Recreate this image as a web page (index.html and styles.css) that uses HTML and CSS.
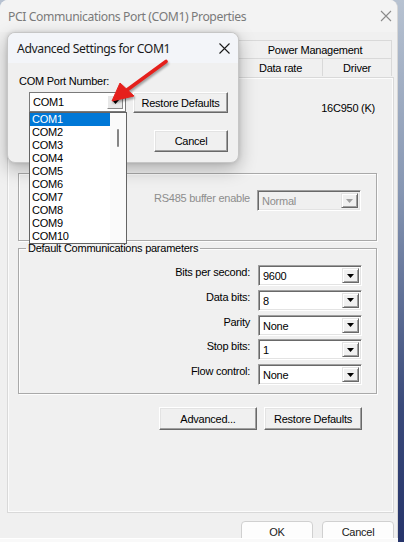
FILE: index.html
```html
<!DOCTYPE html>
<html>
<head>
<meta charset="utf-8">
<link rel="stylesheet" href="styles.css">
</head>
<body>
<div class="screen">
  <div class="window">
    <div class="titlebar">
      <span class="title">PCI Communications Port (COM1) Properties</span>
      <svg class="close" width="12" height="12" viewBox="0 0 12 12"><path d="M1 1L11 11M11 1L1 11" stroke="#8a8a8a" stroke-width="1.1"/></svg>
    </div>
    <div class="sheet">
      <div class="tabrow">
        <div class="tab spacer"></div>
        <div class="tab w154">Power Management</div>
      </div>
      <div class="tabrow">
        <div class="tab spacer"></div>
        <div class="tab w85">Data rate</div>
        <div class="tab w69">Driver</div>
      </div>
      <div class="panel">
        <div class="uart">16C950 (K)</div>
        <div class="group1">
          <span class="lbl disabled">RS485 buffer enable</span>
          <div class="sel off"><span class="val">Normal</span><span class="dd"><svg width="7" height="4" viewBox="0 0 7 4"><path d="M0 0H7L3.5 4Z" fill="#a0a0a0"/></svg></span></div>
        </div>
        <fieldset class="group2">
          <legend>Default Communications parameters</legend>
          <div class="prow"><span class="lbl">Bits per second:</span><div class="sel"><span class="val">9600</span><span class="dd"><svg width="7" height="4" viewBox="0 0 7 4"><path d="M0 0H7L3.5 4Z" fill="#000"/></svg></span></div></div>
          <div class="prow"><span class="lbl">Data bits:</span><div class="sel"><span class="val">8</span><span class="dd"><svg width="7" height="4" viewBox="0 0 7 4"><path d="M0 0H7L3.5 4Z" fill="#000"/></svg></span></div></div>
          <div class="prow"><span class="lbl">Parity</span><div class="sel"><span class="val">None</span><span class="dd"><svg width="7" height="4" viewBox="0 0 7 4"><path d="M0 0H7L3.5 4Z" fill="#000"/></svg></span></div></div>
          <div class="prow"><span class="lbl">Stop bits:</span><div class="sel"><span class="val">1</span><span class="dd"><svg width="7" height="4" viewBox="0 0 7 4"><path d="M0 0H7L3.5 4Z" fill="#000"/></svg></span></div></div>
          <div class="prow"><span class="lbl">Flow control:</span><div class="sel"><span class="val">None</span><span class="dd"><svg width="7" height="4" viewBox="0 0 7 4"><path d="M0 0H7L3.5 4Z" fill="#000"/></svg></span></div></div>
        </fieldset>
        <div class="btnrow">
          <div class="cbtn w98">Advanced...</div>
          <div class="cbtn w98">Restore Defaults</div>
        </div>
      </div>
      <div class="footer">
        <div class="mbtn">OK</div>
        <div class="mbtn">Cancel</div>
      </div>
    </div>
  </div>
  <div class="strip"></div>

  <div class="dialog">
    <div class="dtitle">
      <span>Advanced Settings for COM1</span>
      <svg width="11" height="11" viewBox="0 0 11 11"><path d="M0.5 0.5L10.5 10.5M10.5 0.5L0.5 10.5" stroke="#1a1a1a" stroke-width="1.1"/></svg>
    </div>
    <div class="dbody">
      <div class="dlabel">COM Port Number:</div>
      <div class="drow">
        <div class="combo"><span class="cval">COM1</span><span class="cdd"><svg width="7" height="4" viewBox="0 0 7 4"><path d="M0 0H7L3.5 4Z" fill="#000"/></svg></span></div>
        <div class="cbtn w95">Restore Defaults</div>
      </div>
      <div class="drow2">
        <div class="cbtn w74">Cancel</div>
      </div>
    </div>
  </div>

  <div class="droplist">
    <div class="items">
      <div class="item sel-item">COM1</div>
      <div class="item">COM2</div>
      <div class="item">COM3</div>
      <div class="item">COM4</div>
      <div class="item">COM5</div>
      <div class="item">COM6</div>
      <div class="item">COM7</div>
      <div class="item">COM8</div>
      <div class="item">COM9</div>
      <div class="item">COM10</div>
    </div>
    <div class="scroll"><div class="thumb"></div></div>
  </div>

  <svg class="arrow" width="80" height="60" viewBox="100 50 80 60">
    <path d="M127 90L166 61.5" stroke="#e5201c" stroke-width="3.6" stroke-linecap="round"/>
    <path d="M112 101L120 83L134 96Z" fill="#e5201c" stroke="#e5201c" stroke-width="1" stroke-linejoin="round"/>
  </svg>
</div>
</body>
</html>
```
FILE: styles.css
```css
* { box-sizing: border-box; }
html, body { margin: 0; padding: 0; }
body {
  width: 404px;
  height: 542px;
  overflow: hidden;
  font-family: "Liberation Sans", Arial, sans-serif;
  font-size: 11px;
  letter-spacing: -0.25px;
  color: #000;
}
.screen {
  position: relative;
  width: 404px;
  height: 542px;
  background: linear-gradient(180deg, #b7c2d1 0%, #8797b3 35%, #3a4a7a 75%, #26346a 100%);
}
.window {
  width: 398px;
  height: 538px;
  overflow: hidden;
  background: #f0f0f0;
  border-radius: 8px 8px 0 0;
  border-right: 1px solid #d6d6d6;
  display: flex;
  flex-direction: column;
}
.titlebar {
  height: 32px;
  flex: none;
  display: flex;
  align-items: center;
  justify-content: space-between;
  padding: 0 5px 0 8px;
  background: #f3f3f3;
}
.title {
  font-family: "Noto Sans", "Open Sans", sans-serif;
  font-size: 12.2px;
  letter-spacing: -0.4px;
  color: #7a7a7a;
}
.sheet {
  flex: 1;
  padding: 8px 3px 0 7px;
  display: flex;
  flex-direction: column;
}
.tabrow {
  display: flex;
  height: 18px;
  padding-left: 1px;
}
.tab {
  height: 18px;
  display: flex;
  align-items: center;
  justify-content: center;
  border: 1px solid #d9d9d9;
  border-bottom: none;
  border-left: none;
  background: #f0f0f0;
}
.tab.spacer { width: 230px; border: none; }
.w154 { width: 154px; border-left: 1px solid #d9d9d9; }
.w85 { width: 85px; border-left: 1px solid #d9d9d9; }
.w69 { width: 69px; }
.panel {
  height: 436px;
  margin-top: 1px;
  border: 1px solid #d9d9d9;
  box-shadow: inset 1px 1px 0 #fcfcfc, inset -1px -1px 0 #fcfcfc;
  background: #f0f0f0;
  padding: 0 16px 0 10px;
  display: flex;
  flex-direction: column;
}
.uart {
  margin-top: 23px;
  height: 14px;
  line-height: 14px;
  text-align: right;
  padding-right: 2px;
}
.lbl { white-space: nowrap; }
.disabled { color: #8d8d8d; }
.group1 {
  margin-top: 58px;
  height: 68px;
  border: 1px solid #a9a9a9;
  box-shadow: inset 1px 1px 0 #fdfdfd, 1px 1px 0 #fdfdfd;
  display: flex;
  justify-content: flex-end;
  align-items: flex-start;
  padding: 16px 15px 0 0;
  gap: 7px;
}
.group1 .lbl { line-height: 14px; margin-top: 1px; }
.sel {
  width: 104px;
  height: 21px;
  display: flex;
  padding: 2px;
  background: #fff;
  border: 1px solid;
  border-color: #a0a0a0 #ffffff #ffffff #a0a0a0;
  box-shadow: inset 1px 1px 0 #696969, inset -1px -1px 0 #e3e3e3;
}
.sel .val { flex: 1; line-height: 17px; padding-left: 2px; }
.sel.off { background: #f0f0f0; color: #8d8d8d; }
.dd {
  width: 17px;
  display: flex;
  align-items: center;
  justify-content: center;
  background: #f0f0f0;
  border: 1px solid;
  border-color: #e3e3e3 #696969 #696969 #e3e3e3;
  box-shadow: inset 1px 1px 0 #fff, inset -1px -1px 0 #a0a0a0;
}
.group2 {
  margin: 0;
  padding: 10px 14px 8px 7px;
  border: 1px solid #a9a9a9;
  box-shadow: inset 1px 1px 0 #fdfdfd, 1px 1px 0 #fdfdfd;
  display: flex;
  flex-direction: column;
  gap: 3.75px;
  min-width: 0;
}
.group2 legend {
  padding: 0 2px;
  line-height: 14px;
  height: 14px;
}
.prow {
  display: flex;
  justify-content: flex-end;
  align-items: flex-start;
  gap: 8px;
  height: 21px;
}
.prow .lbl { line-height: 14px; }
.btnrow {
  margin-top: 13px;
  display: flex;
  justify-content: flex-end;
  gap: 7px;
  padding-right: 15px;
}
.cbtn {
  height: 23px;
  display: flex;
  align-items: center;
  justify-content: center;
  background: #f0f0f0;
  border: 1px solid;
  border-color: #ffffff #696969 #696969 #ffffff;
  box-shadow: inset -1px -1px 0 #a0a0a0, inset 1px 1px 0 #e3e3e3;
}
.w98 { width: 98px; }
.w95 { width: 95px; height: 21px; }
.w74 { width: 74px; height: 22px; }
.footer {
  display: flex;
  justify-content: flex-end;
  gap: 9px;
  margin-top: 8px;
}
.mbtn {
  width: 72px;
  height: 25px;
  border: 1px solid #d0d0d0;
  border-radius: 4px;
  background: #fdfdfd;
  display: flex;
  align-items: center;
  justify-content: center;
  padding-bottom: 4px;
  color: #1a1a1a;
}
.strip {
  width: 398px;
  height: 4px;
  background: #f9f9f9;
  border-top: 1px solid #ffffff;
}

/* overlays */
.dialog {
  position: absolute;
  left: 7px;
  top: 32px;
  width: 232px;
  height: 131px;
  background: #f0f0f0;
  border: 1px solid #c6c6c6;
  border-radius: 8px;
  overflow: hidden;
  box-shadow: 0 6px 18px rgba(0, 0, 0, 0.28), 0 0 4px rgba(0, 0, 0, 0.12);
}
.dtitle {
  height: 30px;
  background: #f3f5f9;
  display: flex;
  align-items: center;
  justify-content: space-between;
  padding: 0 8px 0 9px;
  font-family: "Noto Sans", "Open Sans", sans-serif;
  font-size: 12.2px;
  letter-spacing: -0.4px;
  color: #1a1a1a;
}
.dbody { padding: 11px 10px 0 11px; }
.dlabel { line-height: 14px; height: 14px; }
.drow {
  margin-top: 4px;
  display: flex;
  align-items: flex-start;
  padding-left: 10px;
}
.drow .cbtn { margin-left: auto; }
.combo {
  width: 97px;
  height: 20px;
  display: flex;
  padding: 2px;
  background: #fff;
  border: 1px solid #7a7a7a;
}
.cval { flex: 1; line-height: 15px; padding-left: 1px; }
.cdd {
  width: 16px;
  display: flex;
  align-items: center;
  justify-content: center;
  background: #e8e8e8;
  border: 1px solid;
  border-color: #ffffff #8a8a8a #8a8a8a #ffffff;
}
.drow2 {
  margin-top: 17px;
  display: flex;
  justify-content: flex-end;
}
.droplist {
  position: absolute;
  left: 29px;
  top: 112px;
  width: 98px;
  height: 132px;
  background: #fff;
  border: 1px solid #646464;
  display: flex;
}
.items { width: 80px; }
.item {
  height: 13px;
  line-height: 13px;
  padding-left: 2px;
}
.sel-item { background: #0078d7; color: #fff; }
.scroll {
  flex: 1;
  background: #fafafa;
  position: relative;
}
.thumb {
  position: absolute;
  left: 7px;
  top: 16px;
  width: 2px;
  height: 18px;
  border-radius: 1px;
  background: #858585;
}
.arrow {
  position: absolute;
  left: 100px;
  top: 50px;
  filter: drop-shadow(1px 2px 1.2px rgba(0, 0, 0, 0.35));
}
```
